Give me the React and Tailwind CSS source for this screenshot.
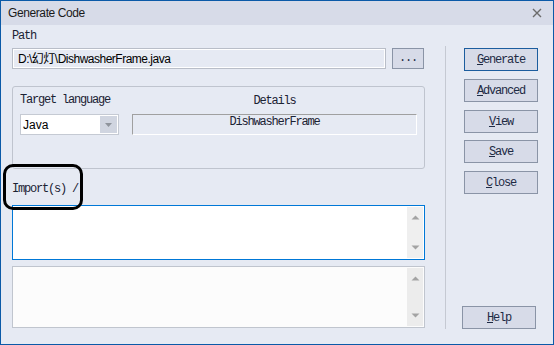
import React from "react";

const mono = { fontFamily: '"Liberation Mono", "DejaVu Sans Mono", monospace' };
const sans = { fontFamily: '"Liberation Sans", "Noto Sans CJK SC", sans-serif' };

function Up() {
  return (
    <svg width="9" height="5" viewBox="0 0 9 5">
      <path d="M4.5 0.5 L8.5 4.5 L0.5 4.5 Z" fill="#a3a3a3" />
    </svg>
  );
}
function Down() {
  return (
    <svg width="9" height="5" viewBox="0 0 9 5">
      <path d="M0.5 0.5 L8.5 0.5 L4.5 4.5 Z" fill="#a3a3a3" />
    </svg>
  );
}

function Btn({ u, rest, primary, className = "" }) {
  return (
    <div
      className={
        "h-[23px] w-[74px] flex items-center justify-center bg-[#d7dbe8] border text-[12px] tracking-[-1.2px] text-[#1e2a44] " +
        (primary ? "border-[#1c5d9e] " : "border-[#8a94a6] ") +
        className
      }
      style={mono}
    >
      <span>
        <u className="underline-offset-1">{u}</u>
        {rest}
      </span>
    </div>
  );
}

function ScrollBar({ bg }) {
  return (
    <div className={"w-[16px] my-[1px] mr-[1px] flex flex-col items-center justify-between py-[8px] " + bg}>
      <Up />
      <Down />
    </div>
  );
}

export default function App() {
  return (
    <div className="relative w-[554px] h-[345px] border border-[#0b5aa8] bg-[#e6eaf3] flex flex-col overflow-hidden">
      {/* Title bar */}
      <div className="h-[24px] bg-[#d7dbe8] flex items-center justify-between pl-[7px] pr-[11px]">
        <span className="text-[12px] tracking-[-0.4px] text-[#1a1a1a]" style={sans}>Generate Code</span>
        <svg width="10" height="10" viewBox="0 0 10 10">
          <path d="M1 1 L9 9 M9 1 L1 9" stroke="#6b6b6b" strokeWidth="1.4" />
        </svg>
      </div>

      {/* Body */}
      <div className="flex flex-row flex-1">
        {/* Left column */}
        <div className="w-[413px] ml-[11px] flex flex-col">
          <div className="mt-[4px] h-[14px] leading-[14px] text-[12px] tracking-[-1.2px] text-[#1b2233]" style={mono}>Path</div>
          <div className="mt-[5px] h-[21px] flex flex-row">
            <div className="w-[374px] h-[21px] border border-[#b9bec8] flex items-center">
              <div className="w-full h-full border border-white flex items-center pl-[4px]">
                <span className="text-[12px] tracking-[-0.5px] text-black leading-none" style={sans}>D:\幻灯\DishwasherFrame.java</span>
              </div>
            </div>
            <div className="ml-[6px] w-[32px] h-[21px] bg-[#d7dbe8] border border-[#8a94a6] flex items-center justify-center text-[12px] tracking-[-1.2px] text-[#1e2a44]" style={mono}>
              <span className="pb-[2px]">...</span>
            </div>
          </div>

          {/* Group box */}
          <div className="mt-[17px] h-[83px] border border-[#bfc4ce] rounded-[3px] flex flex-row pt-[6px]">
            <div className="ml-[7px] flex flex-col">
              <div className="h-[14px] leading-[14px] text-[12px] tracking-[-1.2px] text-[#1b2233]" style={mono}>Target language</div>
              <div className="mt-[7px] w-[99px] h-[21px] bg-white border border-[#c5cad3] flex flex-row">
                <div className="flex-1 flex items-center pl-[2px]">
                  <span className="text-[12px] text-black leading-none" style={sans}>Java</span>
                </div>
                <div className="w-[17px] m-[1px] bg-[#d0d5e0] flex items-center justify-center">
                  <svg width="7" height="4" viewBox="0 0 7 4">
                    <path d="M0 0 L7 0 L3.5 4 Z" fill="#8f949c" />
                  </svg>
                </div>
              </div>
            </div>
            <div className="ml-[13px] w-[285px] flex flex-col">
              <div className="h-[14px] leading-[14px] mt-[1px] text-center text-[12px] tracking-[-1.2px] text-[#1b2233]" style={mono}>Details</div>
              <div className="mt-[6px] h-[21px] border-t border-l border-[#a0a0a0] border-b border-r border-b-white border-r-white flex justify-center">
                <span className="h-[14px] leading-[14px] text-[12px] tracking-[-1.2px] text-[#1b2233]" style={mono}>DishwasherFrame</span>
              </div>
            </div>
          </div>

          <div className="mt-[13px] h-[14px] leading-[14px] text-[12px] tracking-[-1.2px] text-[#1b2233]" style={mono}>Import(s) /</div>

          <div className="mt-[9px] h-[55px] bg-white border border-[#0078d7] flex flex-row justify-end">
            <ScrollBar bg="bg-[#efefef]" />
          </div>

          <div className="mt-[6px] h-[62px] bg-[#fcfcfc] border border-[#c0c5ce] flex flex-row justify-end">
            <ScrollBar bg="bg-[#ececec]" />
          </div>
        </div>

        {/* Separator */}
        <div className="ml-[20px] mt-[21px] w-[1px] h-[283px] bg-[#c5c9d2]" />

        {/* Right column */}
        <div className="ml-[18px] flex flex-col pb-[15px]">
          <Btn u="G" rest="enerate" primary className="mt-[23px]" />
          <Btn u="A" rest="dvanced" className="mt-[8px]" />
          <Btn u="V" rest="iew" className="mt-[8px]" />
          <Btn u="S" rest="ave" className="mt-[7px]" />
          <Btn u="C" rest="lose" className="mt-[8px]" />
          <Btn u="H" rest="elp" className="mt-auto -ml-[2px]" />
        </div>
      </div>

      {/* Annotation circle */}
      <div className="absolute left-[2px] top-[163px] w-[80px] h-[46px] border-[3px] border-black rounded-[10px]" />
    </div>
  );
}
